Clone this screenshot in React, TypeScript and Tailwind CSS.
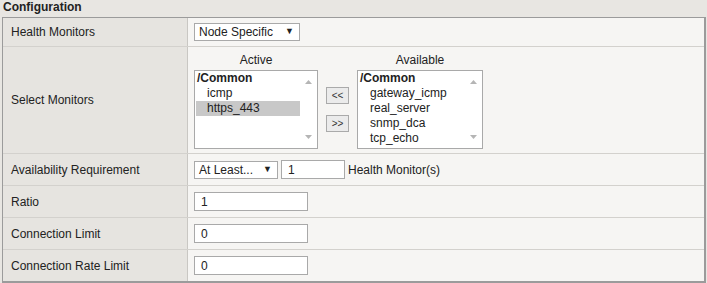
import React from 'react'

const font = { fontFamily: '"Liberation Sans", Arial, sans-serif' }

function Select({ label, width }: { label: string; width: string }) {
  return (
    <div className={`flex h-[18px] items-center justify-between border border-[#a9a9a9] bg-white pl-[4px] pr-[5px] text-[12px] text-[#222] ${width}`}>
      <span>{label}</span>
      <span className="text-[9px]">▼</span>
    </div>
  )
}

function TextInput({ value, width }: { value: string; width: string }) {
  return (
    <div className={`flex h-[19px] items-center border border-[#a9a9a9] bg-white pl-[6px] text-[12px] text-[#222] ${width}`}>
      {value}
    </div>
  )
}

function ListBox({ items, selected, width }: { items: string[]; selected?: string; width: string }) {
  return (
    <div className={`flex h-[79px] border border-[#a9a9a9] bg-white ${width}`}>
      <div className="flex-1 pl-[1px] text-[12px] leading-[15px] text-[#222]">
        <div className="font-bold pl-[1px]">/Common</div>
        {items.map((it) => (
          <div key={it} className={`pl-[11px] ${it === selected ? 'bg-[#c8c8c8]' : ''}`}>
            {it}
          </div>
        ))}
      </div>
      <div className="flex w-[17px] flex-col items-center justify-between py-[9px] text-[#b5b5b5]">
        <svg width="7" height="4" viewBox="0 0 7 4"><path d="M0 4 L3.5 0 L7 4 Z" fill="currentColor" /></svg>
        <svg width="7" height="4" viewBox="0 0 7 4"><path d="M0 0 L3.5 4 L7 0 Z" fill="currentColor" /></svg>
      </div>
    </div>
  )
}

function MoveButton({ label }: { label: string }) {
  return (
    <div className="flex h-[17px] w-[23px] items-center justify-center border border-[#aaa] bg-[#ebebeb] text-[10px] text-[#333]">
      {label}
    </div>
  )
}

function Row({ label, height, children, last }: { label: string; height: string; children: React.ReactNode; last?: boolean }) {
  return (
    <div className={`flex ${height} ${last ? '' : 'border-b border-[#d3d1cd]'}`}>
      <div className="flex w-[185px] items-center border-r border-[#c9c7c3] bg-[#e6e4e0] pl-[8px] text-[12px] text-[#222]">
        {label}
      </div>
      <div className="flex flex-1 items-center bg-[#f6f5f3] pl-[6px]">{children}</div>
    </div>
  )
}

export default function App() {
  return (
    <div className="h-[283px] w-[707px] bg-[#e8e6e2]" style={font}>
      <div className="h-[17px] pl-[3px] text-[12px] font-bold leading-[15px] text-[#222]">Configuration</div>
      <div className="ml-[2px] w-[704px] border border-[#9b9b9b] border-b-2 border-r-2">
        <Row label="Health Monitors" height="h-[29px]">
          <Select label="Node Specific" width="w-[106px]" />
        </Row>
        <Row label="Select Monitors" height="h-[107px]">
          <div className="flex h-full items-start gap-[8px] pt-[6px]">
            <div className="flex flex-col">
              <div className="h-[17px] text-center text-[12px] leading-[15px] text-[#222]">Active</div>
              <ListBox items={['icmp', 'https_443']} selected="https_443" width="w-[124px]" />
            </div>
            <div className="mt-[34px] flex flex-col gap-[11px]">
              <MoveButton label="<<" />
              <MoveButton label=">>" />
            </div>
            <div className="flex flex-col">
              <div className="h-[17px] text-center text-[12px] leading-[15px] text-[#222]">Available</div>
              <ListBox items={['gateway_icmp', 'real_server', 'snmp_dca', 'tcp_echo']} width="w-[126px]" />
            </div>
          </div>
        </Row>
        <Row label="Availability Requirement" height="h-[32px]">
          <Select label="At Least..." width="w-[84px]" />
          <div className="ml-[3px]">
            <TextInput value="1" width="w-[64px]" />
          </div>
          <span className="ml-[3px] text-[12px] text-[#222]">Health Monitor(s)</span>
        </Row>
        <Row label="Ratio" height="h-[32px]">
          <TextInput value="1" width="w-[114px]" />
        </Row>
        <Row label="Connection Limit" height="h-[32px]">
          <TextInput value="0" width="w-[114px]" />
        </Row>
        <Row label="Connection Rate Limit" height="h-[31px]" last>
          <TextInput value="0" width="w-[114px]" />
        </Row>
      </div>
    </div>
  )
}
